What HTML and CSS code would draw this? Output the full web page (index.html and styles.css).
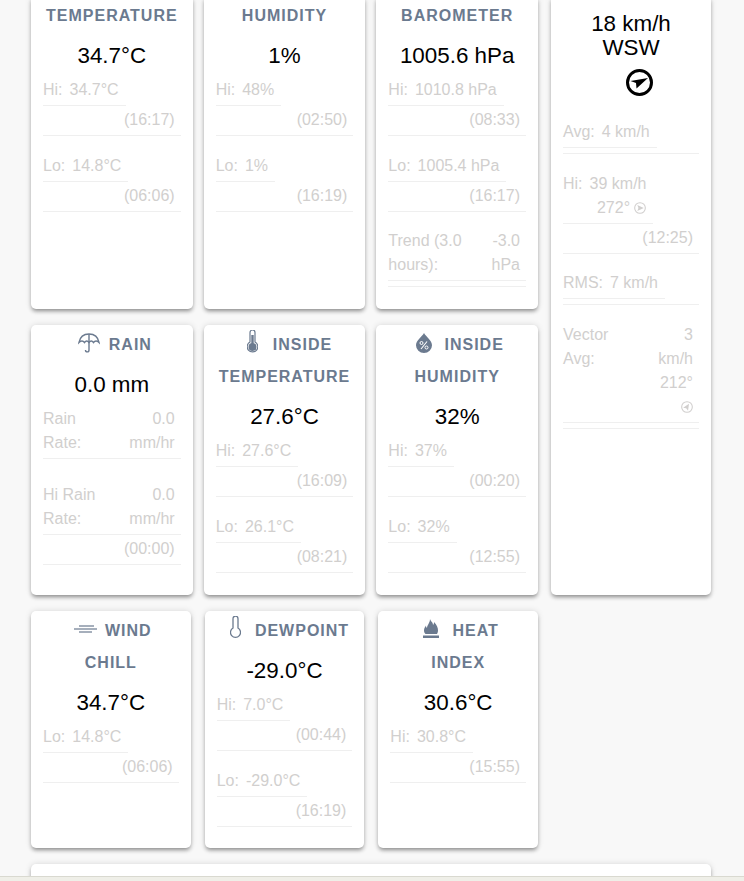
FILE: index.html
```html
<!DOCTYPE html>
<html>
<head>
<meta charset="utf-8">
<title>Weather</title>
<link rel="stylesheet" href="styles.css">
</head>
<body>
<div class="page">
  <div class="upper">
    <div class="cards cards-wide">
      <div class="card card-tall">
        <div class="title">TEMPERATURE</div>
        <div class="value">34.7°C</div>
        <div class="stat"><div class="pair"><span>Hi:</span><span>34.7°C</span></div><div class="time">(16:17)</div></div>
        <div class="stat"><div class="pair"><span>Lo:</span><span>14.8°C</span></div><div class="time">(06:06)</div></div>
      </div>
      <div class="card card-tall">
        <div class="title">HUMIDITY</div>
        <div class="value">1%</div>
        <div class="stat"><div class="pair"><span>Hi:</span><span>48%</span></div><div class="time">(02:50)</div></div>
        <div class="stat"><div class="pair"><span>Lo:</span><span>1%</span></div><div class="time">(16:19)</div></div>
      </div>
      <div class="card card-tall">
        <div class="title">BAROMETER</div>
        <div class="value">1005.6 hPa</div>
        <div class="stat"><div class="pair"><span>Hi:</span><span>1010.8 hPa</span></div><div class="time">(08:33)</div></div>
        <div class="stat"><div class="pair"><span>Lo:</span><span>1005.4 hPa</span></div><div class="time">(16:17)</div></div>
        <div class="stat">
          <div class="split"><span>Trend (3.0<br>hours):</span><span>-3.0<br>hPa</span></div>
          <div class="time time-empty"></div>
        </div>
      </div>

      <div class="card card-mid">
        <div class="title">
          <svg class="icon icon-umbrella" width="22" height="20" viewBox="0 0 22 20" fill="none" stroke="currentColor" stroke-width="1.400"><path d="M1 9.500C2 4 6 1 11 1s9 3 10 8.500C19 7.500 17 7.500 15.500 9.500 14 7.500 12.500 7.500 11 9.500 9.500 7.500 8 7.500 6.500 9.500 5 7.500 3 7.500 1 9.500Z"/><path d="M11 1V17c0 2.500-3.500 2.500-3.500 0"/></svg>RAIN
        </div>
        <div class="value">0.0 mm</div>
        <div class="stat stat-open">
          <div class="split split-line"><span>Rain<br>Rate:</span><span>0.0<br>mm/hr</span></div>
        </div>
        <div class="stat">
          <div class="split"><span>Hi Rain<br>Rate:</span><span>0.0<br>mm/hr</span></div>
          <div class="time">(00:00)</div>
        </div>
      </div>
      <div class="card card-mid">
        <div class="title">
          <svg class="icon icon-thermo" width="11" height="23" viewBox="0 0 11 23"><path d="M3 2.500a2.500 2.500 0 0 1 5 0V12a5.300 5.300 0 1 1-5 0Z" fill="none" stroke="currentColor" stroke-width="1.200"/><circle cx="5.500" cy="17" r="4" fill="currentColor"/><rect x="4.300" y="5" width="2.400" height="10" fill="currentColor"/></svg>INSIDE<br>TEMPERATURE
        </div>
        <div class="value">27.6°C</div>
        <div class="stat"><div class="pair"><span>Hi:</span><span>27.6°C</span></div><div class="time">(16:09)</div></div>
        <div class="stat"><div class="pair"><span>Lo:</span><span>26.1°C</span></div><div class="time">(08:21)</div></div>
      </div>
      <div class="card card-mid">
        <div class="title">
          <svg class="icon icon-drop" width="16" height="20" viewBox="0 0 16 20"><path d="M8 0C6 4 0 7 0 12.300a8 7.700 0 0 0 16 0C16 7 10 4 8 0Z" fill="currentColor"/><circle cx="5.500" cy="10" r="1.500" fill="none" stroke="#fff"/><circle cx="10.500" cy="14.500" r="1.500" fill="none" stroke="#fff"/><path d="M11 8.500 5 16" stroke="#fff" stroke-width="1.100"/></svg>INSIDE<br>HUMIDITY
        </div>
        <div class="value">32%</div>
        <div class="stat"><div class="pair"><span>Hi:</span><span>37%</span></div><div class="time">(00:20)</div></div>
        <div class="stat"><div class="pair"><span>Lo:</span><span>32%</span></div><div class="time">(12:55)</div></div>
      </div>
    </div>

    <div class="card card-wind">
      <div class="value">18 km/h<br>WSW</div>
      <svg class="compass" width="27" height="27" viewBox="-13.500 -13.500 27 27"><circle r="12" fill="none" stroke="#000" stroke-width="3"/><path d="M8.500-4.500-9-1.500-3.500.5-3 6Z" fill="#000"/></svg>
      <div class="stat"><div class="pair"><span>Avg:</span><span>4 km/h</span></div><div class="time time-empty"></div></div>
      <div class="stat">
        <div class="pair pair-wrap"><span>Hi:</span><span>39 km/h<br>272°
          <svg class="compass-small" width="12" height="12" viewBox="-13.500 -13.500 27 27"><circle r="12" fill="none" stroke="currentColor" stroke-width="2.400"/><path d="M8.500 0-6-6.500-3.500 0-6 6.500Z" fill="currentColor"/></svg></span></div>
        <div class="time">(12:25)</div>
      </div>
      <div class="stat"><div class="pair"><span>RMS:</span><span>7 km/h</span></div><div class="time time-empty"></div></div>
      <div class="stat">
        <div class="split"><span>Vector<br>Avg:</span><span>3<br>km/h<br>212°<br>
          <svg class="compass-small" width="12" height="12" viewBox="-13.500 -13.500 27 27"><circle r="12" fill="none" stroke="currentColor" stroke-width="2.400"/><path d="M8.500 0-6-6.500-3.500 0-6 6.500Z" fill="currentColor" transform="rotate(-58)"/></svg></span></div>
        <div class="time time-empty"></div>
      </div>
    </div>
  </div>

  <div class="cards cards-narrow">
    <div class="card card-low">
      <div class="title">
        <svg class="icon icon-wind" width="23" height="9" viewBox="0 0 23 9" fill="none" stroke="currentColor" stroke-width="1.200"><path d="M5 1H20"/><path d="M0 4H23"/><path d="M5 7H18"/></svg>WIND<br>CHILL
      </div>
      <div class="value">34.7°C</div>
      <div class="stat"><div class="pair"><span>Lo:</span><span>14.8°C</span></div><div class="time">(06:06)</div></div>
    </div>
    <div class="card card-low">
      <div class="title">
        <svg class="icon icon-dew" width="11" height="22" viewBox="0 0 11 22" fill="none" stroke="currentColor" stroke-width="1.300"><path d="M3 2.700a2.500 2.500 0 0 1 5 0V12a5 5 0 1 1-5 0Z"/></svg>DEWPOINT
      </div>
      <div class="value">-29.0°C</div>
      <div class="stat"><div class="pair"><span>Hi:</span><span>7.0°C</span></div><div class="time">(00:44)</div></div>
      <div class="stat"><div class="pair"><span>Lo:</span><span>-29.0°C</span></div><div class="time">(16:19)</div></div>
    </div>
    <div class="card card-low">
      <div class="title">
        <svg class="icon icon-flame" width="16" height="19" viewBox="0 0 16 19"><path d="M7 0c1 3 3 3 3 6 1-1 1-2 1-3 3 3 4 6 4 8.500 0 1.500-.5 2.500-1 3.500H2.500C1.500 14 1 13 1 11.500c0-2 1-3.500 2-5 0 1.500.5 2 1 2.500C4 6 7 4 7 0Z" fill="currentColor"/><rect y="16.500" width="16" height="2.500" fill="currentColor"/></svg>HEAT<br>INDEX
      </div>
      <div class="value">30.6°C</div>
      <div class="stat"><div class="pair"><span>Hi:</span><span>30.8°C</span></div><div class="time">(15:55)</div></div>
    </div>
  </div>

  <div class="card card-last"></div>
</div>
<div class="bottom-bar"></div>
</body>
</html>
```

FILE: styles.css
```css
html, body {
  margin: 0;
  height: 881px;
  overflow: hidden;
  background: #f8f8f8;
}

body {
  font-family: "Liberation Sans", Arial, sans-serif;
  font-size: 16px;
  line-height: 24px;
  color: #d1cfce;
}

.page {
  margin-top: -4px;
  padding: 0 33px 0 31px;
}

.upper {
  display: flex;
  gap: 13px;
}

.cards {
  display: grid;
  grid-template-columns: repeat(3, 1fr);
  width: 507px;
  row-gap: 16px;
}

.cards-wide {
  column-gap: 11px;
}

.cards-narrow {
  column-gap: 14px;
  margin-top: 16px;
}

.card {
  box-sizing: border-box;
  padding: 4px 12px 0;
  background: #fff;
  border-radius: 5px;
  box-shadow: 0 3px 4px -1px rgba(0, 0, 0, .4), 0 0 6px rgba(0, 0, 0, .13);
}

.card-tall {
  height: 313px;
}

.card-mid {
  height: 270px;
}

.card-low {
  height: 237px;
}

.card-wind {
  width: 160px;
  padding-top: 16px;
}

.card-last {
  height: 40px;
  margin-top: 16px;
}

.title {
  font-weight: bold;
  line-height: 32px;
  letter-spacing: 1px;
  text-align: center;
  white-space: nowrap;
  color: #6b7a8f;
}

.value {
  margin: 12px 0 8px;
  font-size: 22.4px;
  line-height: 24px;
  text-align: center;
  color: #000;
}

.card-wind .value {
  margin: 0;
}

.compass {
  display: block;
  margin: 9px 0 22px 63px;
}

.compass-small {
  vertical-align: -1px;
}

.stat {
  margin-bottom: 15.5px;
}

.stat-open {
  margin-bottom: 21.6px;
}

.pair,
.split,
.time {
  padding: 2px 0 3px;
  border-bottom: 1px solid #efefef;
}

.pair {
  display: flex;
  gap: 7px;
  width: fit-content;
  padding-right: 7px;
}

.pair-wrap span:last-child {
  text-align: right;
}

.split {
  display: flex;
  justify-content: space-between;
  padding-right: 6px;
}

.split span:last-child {
  text-align: right;
}

.time {
  padding-right: 6px;
  text-align: right;
}

.time-empty {
  height: 5px;
  padding: 0;
}

.icon-umbrella {
  margin: 0 9px 0 6px;
  vertical-align: -3px;
}

.icon-thermo {
  margin: 0 15px 0 10px;
  vertical-align: -3px;
}

.icon-drop {
  margin: 0 12px 0 6px;
  vertical-align: -3px;
}

.icon-wind {
  margin: 0 8px 0 4px;
  vertical-align: 2px;
}

.icon-dew {
  margin: 0 14px 0 10px;
  vertical-align: -2px;
}

.icon-flame {
  margin: 0 13px 0 6px;
  vertical-align: -2px;
}

.bottom-bar {
  position: fixed;
  left: 0;
  right: 0;
  bottom: 0;
  height: 4px;
  background: #efefe8;
  border-top: 1px solid #d9d9d0;
}
```
